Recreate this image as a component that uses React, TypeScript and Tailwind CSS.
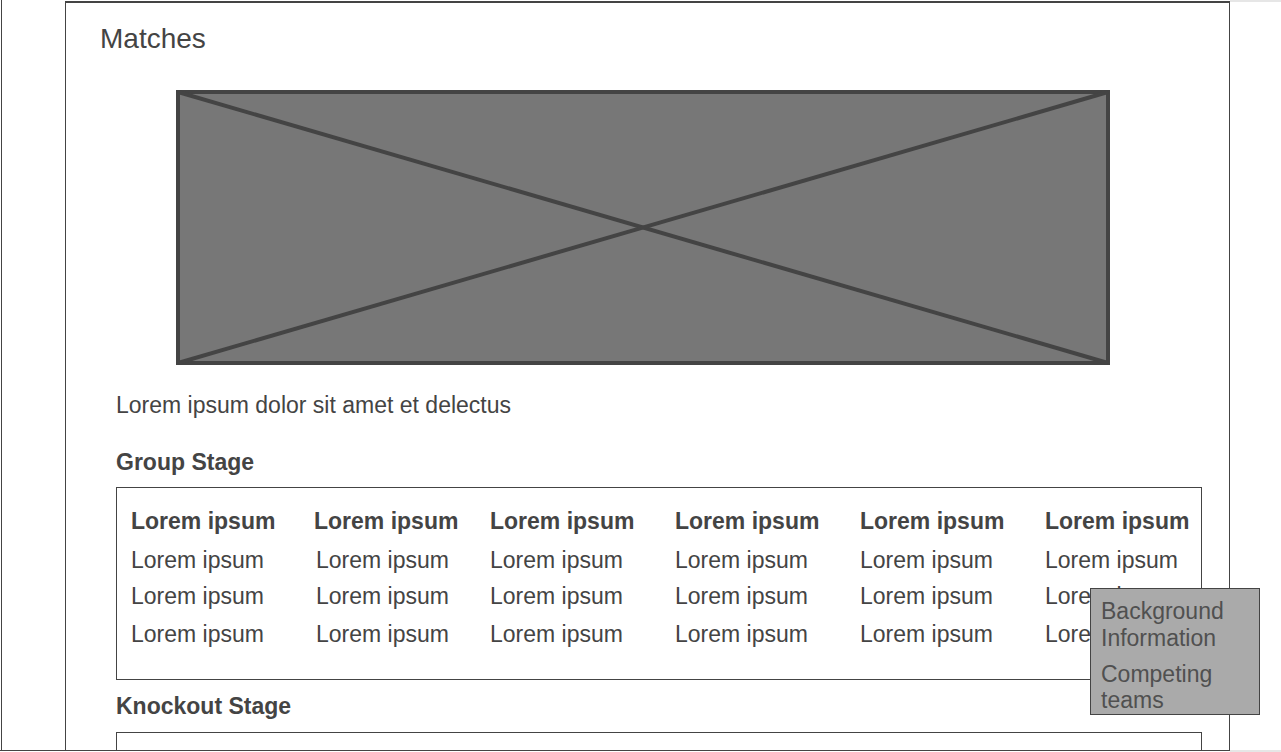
import React from "react";

const font = { fontFamily: '"Liberation Sans", Arial, sans-serif' };

const cols = [0, 1, 2, 3, 4, 5];
const rows = [0, 1, 2];

export default function App() {
  return (
    <div className="relative w-[1281px] h-[752px] overflow-hidden bg-white text-[#444]" style={font}>
      <div className="flex h-[751px] w-[1230px] border-b border-[#444]">
        <div className="ml-[1px] w-[64px] border-l border-[#444]" />
        <div className="mt-[1px] flex-1 border-l border-r border-t-2 border-[#444] overflow-hidden">
          <div className="pl-[34px] pt-[20px] text-[28px] leading-[32px]">Matches</div>
          <div className="ml-[110px] mt-[35px] h-[275px] w-[934px]">
            <svg width="934" height="275" viewBox="0 0 934 275" className="block">
              <rect x="2" y="2" width="930" height="271" fill="#777" stroke="#444" strokeWidth="4" />
              <line x1="2" y1="2" x2="932" y2="273" stroke="#444" strokeWidth="4" />
              <line x1="932" y1="2" x2="2" y2="273" stroke="#444" strokeWidth="4" />
            </svg>
          </div>
          <div className="ml-[50px] mr-[27px]">
            <p className="mt-[27px] text-[23px] leading-[27px]">Lorem ipsum dolor sit amet et delectus</p>
            <h2 className="mt-[30px] text-[23px] font-bold leading-[27px]">Group Stage</h2>
            <div className="mt-[11px] h-[193px] border border-[#444] pl-[14px] pt-[20px]">
              <div className="grid grid-cols-[183px_176px_185px_185px_185px_1fr] text-[23px] leading-[27px]">
                {cols.map((c) => (
                  <div key={"h" + c} className="font-bold whitespace-nowrap">Lorem ipsum</div>
                ))}
                {rows.map((r) =>
                  cols.map((c) => (
                    <div
                      key={r + "-" + c}
                      className={
                        "whitespace-nowrap " +
                        (c === 1 ? "pl-[2px] " : "") +
                        (r === 0 ? "mt-[12px]" : r === 1 ? "mt-[9px]" : "mt-[11px]")
                      }
                    >
                      Lorem ipsum
                    </div>
                  ))
                )}
              </div>
            </div>
            <h2 className="mt-[13px] text-[23px] font-bold leading-[27px]">Knockout Stage</h2>
            <div className="mt-[12px] h-[60px] border border-[#444]" />
          </div>
        </div>
      </div>
      <div className="absolute left-[1230px] top-0 h-[2px] w-[51px] bg-[#e6e6e6]" />
      <div className="absolute left-[1230px] top-[750px] h-[2px] w-[51px] bg-[#e6e6e6]" />
      <div className="absolute left-[1090px] top-[588px] h-[127px] w-[170px] border border-[#444] bg-[#aaa] pl-[10px] pt-[9px] text-[23px] leading-[27px] text-[#505050]">
        <div>Background Information</div>
        <div className="mt-[9px] leading-[26px]">Competing teams</div>
      </div>
    </div>
  );
}
